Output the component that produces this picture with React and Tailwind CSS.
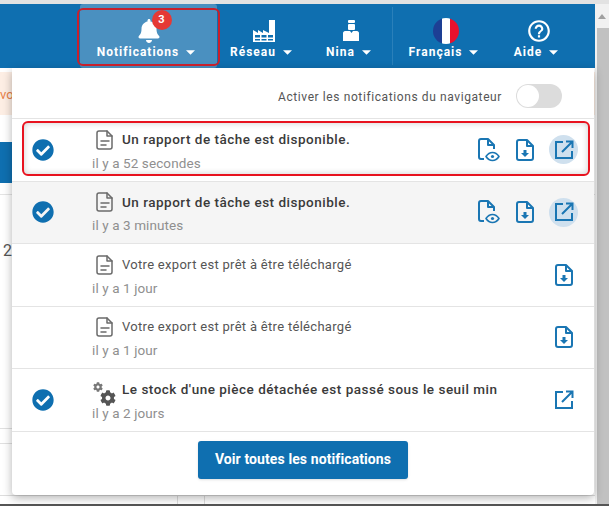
import React from 'react';
import { FaBell, FaCog, FaCheckCircle } from 'react-icons/fa';
import { MdHelpOutline } from 'react-icons/md';

const Caret = () => (
  <svg width="9" height="5" viewBox="0 0 10 5" className="inline-block ml-[7px] mb-[1px]">
    <path d="M0 0h10L5 5z" fill="currentColor" />
  </svg>
);

const FactoryIcon = () => (
  <svg width="24" height="24" viewBox="0 0 24 24">
    <path d="M1 23V11l5 3v-3l5 3v-3l6 3V1h6v22z" fill="white" />
    <path d="M3 16h5v2.500H3zM9.500 16h5v2.500h-5zM16 16h5v2.500h-5zM3 20h5v1.500H3zM9.500 20h5v1.500h-5zM16 20h5v1.500h-5z" fill="#0f6fb0" />
  </svg>
);

const UserIcon = () => (
  <svg width="24" height="24" viewBox="0 0 24 24" fill="white">
    <rect x="9" y="1" width="7" height="3" rx="1" />
    <rect x="9" y="5" width="7" height="6" rx="1" />
    <path d="M4 14c0-1 1-2 2-2h5l1.500 2 1.500-2h4c1 0 2 1 2 2v8H4z" />
  </svg>
);

const FlagIcon = () => (
  <div className="w-[26px] h-[26px] rounded-full overflow-hidden flex">
    <div className="flex-1 bg-[#1d3f94]" />
    <div className="flex-1 bg-white" />
    <div className="flex-1 bg-[#e8112d]" />
  </div>
);

const NavItem = ({ label, icon, className }) => (
  <div className={`flex flex-col items-center justify-end h-full pb-[8px] text-white ${className}`}>
    <div className="h-[24px] flex items-center justify-center">{icon}</div>
    <div className="text-[12px] font-bold tracking-[1px] leading-[16px] whitespace-nowrap mt-[1px] mr-[5px]">
      {label}
      <Caret />
    </div>
  </div>
);

const DocIcon = () => (
  <svg width="20" height="22" viewBox="0 0 20 22" fill="none" stroke="#6b6b6b" strokeWidth="1.500" strokeLinejoin="round" strokeLinecap="round">
    <path d="M4 2h8l5 5v11c0 1-1 2-2 2H4c-1 0-2-1-2-2V4c0-1 1-2 2-2z" />
    <path d="M12 2v5h5" />
    <path d="M6 12h8M6 16h5" />
  </svg>
);

const GearsIcon = () => (
  <div className="relative w-[23px] h-[25px] mt-[9px] shrink-0">
    <FaCog size={10} color="#777" className="absolute left-0 top-0" />
    <FaCog size={16} color="#555" className="absolute right-0 bottom-[1px]" />
  </div>
);

const PreviewIcon = () => (
  <svg width="24" height="24" viewBox="0 0 24 24" fill="none" stroke="#1a76b3" strokeWidth="2" strokeLinejoin="round">
    <path d="M7 21H4c-1 0-2-1-2-2V3c0-1 1-2 2-2h7l6 6v4" />
    <path d="M11 1v6h6" />
    <path d="M9 18.500c2-3 4-4 6.500-4s4.500 1 6.500 4c-2 3-4 4-6.500 4s-4.500-1-6.500-4z" strokeWidth="1.600" />
    <circle cx="15.500" cy="18.500" r="1.600" fill="#1a76b3" stroke="none" />
  </svg>
);

const DownloadIcon = () => (
  <svg width="18" height="22" viewBox="0 0 18 22" fill="none" stroke="#1a76b3" strokeWidth="2" strokeLinejoin="round">
    <path d="M3 1h8l6 6v12c0 1-1 2-2 2H3c-1 0-2-1-2-2V3c0-1 1-2 2-2z" />
    <path d="M11 1v6h6" />
    <path d="M7.500 11h3v3h2.500L9 18l-4-4h2.500z" fill="#1a76b3" stroke="none" />
  </svg>
);

const OpenIcon = () => (
  <svg width="20" height="20" viewBox="0 0 20 20" fill="none" stroke="#1a76b3" strokeWidth="2">
    <path d="M9 2H2v16h16v-7" />
    <path d="M8 12 18 2M12 1.500h6.500V8" />
  </svg>
);

const NotificationRow = ({ title, time, icon, bold, checked, active, shaded, items }) => (
  <div className={`h-[62.500px] flex border-b border-[#e4e4e4] ${shaded ? 'bg-[#f5f5f5]' : 'bg-white'}`}>
    <div className="w-[64px] flex items-center pl-[20px] shrink-0">
      {checked && <FaCheckCircle size={22} color="#0f6fb0" />}
    </div>
    <div className="flex-1 pl-[16px] pt-[8.500px] min-w-0">
      <div className="flex items-center h-[24px] gap-[5px]">
        <div className="w-[25px] flex justify-center shrink-0">{icon === 'gear' ? <GearsIcon /> : <DocIcon />}</div>
        <span className={`whitespace-nowrap ${bold ? 'text-[13.500px] tracking-[0.5px] font-medium text-[#3a3a3a]' : 'text-[13px] tracking-[0.3px] text-[#555]'}`}>{title}</span>
      </div>
      <div className="text-[13.500px] tracking-[0.1px] text-[#8f8f8f] mt-[2px] leading-[18px]">{time}</div>
    </div>
    <div className="flex items-center gap-[12px] pr-[16px]">
      {items.length > 1 && <div className="w-[24px] flex justify-center"><PreviewIcon /></div>}
      {items.length > 1 && <div className="w-[24px] flex justify-center"><DownloadIcon /></div>}
      <div className={`w-[29px] h-[29px] rounded-full flex items-center justify-center ${active ? 'bg-[#cfe0ee]' : ''}`}>
        {items.length === 1 && items[0] === 'download' ? <DownloadIcon /> : <OpenIcon />}
      </div>
    </div>
  </div>
);

const rows = [
  { title: 'Un rapport de tâche est disponible.', time: 'il y a 52 secondes', bold: true, checked: true, active: true, items: ['preview', 'download', 'open'] },
  { title: 'Un rapport de tâche est disponible.', time: 'il y a 3 minutes', bold: true, checked: true, active: true, shaded: true, items: ['preview', 'download', 'open'] },
  { title: 'Votre export est prêt à être téléchargé', time: 'il y a 1 jour', items: ['download'] },
  { title: 'Votre export est prêt à être téléchargé', time: 'il y a 1 jour', items: ['download'] },
  { title: "Le stock d'une pièce détachée est passé sous le seuil min", time: 'il y a 2 jours', bold: true, checked: true, icon: 'gear', items: ['open'] },
];

export default function App() {
  return (
    <div className="relative w-[609px] h-[506px] overflow-hidden bg-white font-['Roboto',sans-serif] flex flex-col">
      <div className="h-[4px] bg-[#e2e2e2] shrink-0" />
      <div className="flex flex-1 min-h-0">
        <div className="flex-1 flex flex-col min-w-0">
          {/* top bar */}
          <div className="h-[64px] bg-[#0f6fb0] flex items-center shrink-0">
            <div className="w-[80px]" />
            <NavItem label="Notifications" className="w-[137px] bg-[#4a90c0] rounded-[3px]" icon={
              <div className="relative">
                <FaBell size={24} color="white" />
                <div className="absolute -top-[9px] -right-[11px] w-[20px] h-[20px] rounded-full bg-[#e53935] text-white text-[11px] font-bold flex items-center justify-center">3</div>
              </div>
            } />
            <NavItem label="Réseau" className="w-[93px]" icon={<FactoryIcon />} />
            <NavItem label="Nina" className="w-[82px]" icon={<UserIcon />} />
            <div className="w-px h-[58px] bg-[#2a80ba]" />
            <NavItem label="Français" className="w-[106px]" icon={<FlagIcon />} />
            <NavItem label="Aide" className="w-[79px]" icon={<MdHelpOutline size={26} color="white" />} />
          </div>
          {/* page behind the dropdown */}
          <div className="flex-1 flex flex-col min-h-0">
            <div className="h-[43px] mt-[4px] bg-[#fdeee4] text-[#e8814a] text-[13px] leading-[46px]">vo</div>
            <div className="h-[41px] mt-[27px] w-[12px] bg-[#0f6fb0]" />
            <div className="h-[12px] border-b border-[#e4e4e4]" />
            <div className="mt-[48px] pl-[3px] text-[16px] leading-[16px] text-[#555]">2</div>
            <div className="mt-[169px] h-[16px] w-[12px] border-y border-[#e0e0e0]" />
            <div className="mt-auto h-[9px] flex border-t border-[#ddd]">
              <div className="w-[178px] border-r border-[#ddd]" />
              <div className="w-[27px] border-r border-[#ddd]" />
            </div>
          </div>
        </div>
        {/* scrollbar */}
        <div className="w-[14px] bg-[#f1f1f1] flex flex-col shrink-0">
          <div className="h-[24px] flex justify-center pt-[10px]">
            <svg width="8" height="5" viewBox="0 0 8 5"><path d="M0 5 4 0l4 5z" fill="#a0a0a0" /></svg>
          </div>
          <div className="flex-1 ml-[2px] bg-[#c1c1c1]" />
        </div>
      </div>
      <div className="h-[2px] bg-[#555] shrink-0" />

      {/* dropdown */}
      <div className="absolute left-[12px] top-[68px] w-[582px] h-[427px] bg-white rounded-b-[4px] shadow-[0_3px_10px_rgba(0,0,0,0.3)] flex flex-col">
        <div className="h-[51px] flex items-end justify-end pr-[32px] pb-[10px] border-b border-[#e4e4e4] shrink-0">
          <span className="text-[12px] leading-[21px] text-[#555] tracking-[0.6px]">Activer les notifications du navigateur</span>
          <div className="ml-[14px] w-[46px] h-[24px] rounded-full bg-[#dcdcdc] flex items-center pl-[1px]">
            <div className="w-[22px] h-[22px] rounded-full bg-white" />
          </div>
        </div>
        {rows.map((row, index) => (
          <NotificationRow key={index} {...row} />
        ))}
        <div className="flex-1 flex justify-center pt-[9px]">
          <button className="w-[210px] h-[38px] bg-[#0f6fb0] rounded-[3px] text-white text-[14px] tracking-[0.1px] font-bold shadow-sm">Voir toutes les notifications</button>
        </div>
      </div>

      {/* red highlights */}
      <div className="absolute left-[77px] top-[8px] w-[143px] h-[58px] border-2 border-[#c8202c] rounded-[6px]" />
      <div className="absolute left-[22px] top-[121px] w-[568px] h-[55px] border-2 border-[#e8131f] rounded-[6px] shadow-[inset_0_0_6px_rgba(0,0,0,0.2)]" />
    </div>
  );
}
